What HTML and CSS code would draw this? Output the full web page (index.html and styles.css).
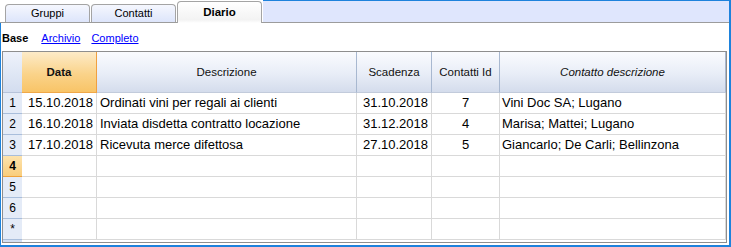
FILE: index.html
```html
<!DOCTYPE html>
<html lang="it">
<head>
  <meta charset="UTF-8" />
  <title>Diario</title>
  <link rel="stylesheet" href="styles.css">
</head>
<body>
  <div class="window">
    <div class="tabbar">
      <div class="tab">Gruppi</div>
      <div class="tab">Contatti</div>
      <div class="tab active">Diario</div>
      <div class="tab-fill"></div>
    </div>

    <div class="panel">
      <div class="modes">
        <b>Base</b>
        <a href="#">Archivio</a>
        <a href="#">Completo</a>
      </div>

      <div class="grid">
        <div class="row head">
          <div class="num"></div>
          <div class="cell sel">Data</div>
          <div class="cell">Descrizione</div>
          <div class="cell">Scadenza</div>
          <div class="cell">Contatti Id</div>
          <div class="cell it">Contatto descrizione</div>
        </div>
        <div class="row">
          <div class="num">1</div>
          <div class="cell right">15.10.2018</div>
          <div class="cell">Ordinati vini per regali ai clienti</div>
          <div class="cell right">31.10.2018</div>
          <div class="cell center">7</div>
          <div class="cell last">Vini Doc SA; Lugano</div>
        </div>
        <div class="row">
          <div class="num">2</div>
          <div class="cell right">16.10.2018</div>
          <div class="cell">Inviata disdetta contratto locazione</div>
          <div class="cell right">31.12.2018</div>
          <div class="cell center">4</div>
          <div class="cell last">Marisa; Mattei; Lugano</div>
        </div>
        <div class="row">
          <div class="num">3</div>
          <div class="cell right">17.10.2018</div>
          <div class="cell">Ricevuta merce difettosa</div>
          <div class="cell right">27.10.2018</div>
          <div class="cell center">5</div>
          <div class="cell last">Giancarlo; De Carli; Bellinzona</div>
        </div>
        <div class="row">
          <div class="num current">4</div>
          <div class="cell"></div>
          <div class="cell"></div>
          <div class="cell"></div>
          <div class="cell"></div>
          <div class="cell"></div>
        </div>
        <div class="row">
          <div class="num">5</div>
          <div class="cell"></div>
          <div class="cell"></div>
          <div class="cell"></div>
          <div class="cell"></div>
          <div class="cell"></div>
        </div>
        <div class="row">
          <div class="num">6</div>
          <div class="cell"></div>
          <div class="cell"></div>
          <div class="cell"></div>
          <div class="cell"></div>
          <div class="cell"></div>
        </div>
        <div class="row">
          <div class="num">*</div>
          <div class="cell"></div>
          <div class="cell"></div>
          <div class="cell"></div>
          <div class="cell"></div>
          <div class="cell"></div>
        </div>
        <div class="row tail">
          <div class="num"></div>
        </div>
      </div>
    </div>
  </div>
</body>
</html>
```

FILE: styles.css
```css
body {
  margin: 0;
  font-family: 'Liberation Sans', Arial, sans-serif;
  color: #000;
  background: #fff;
}
.window {
  width: 731px;
  height: 247px;
  box-sizing: border-box;
  border-right: 2px solid #1e82dc;
  display: flex;
  flex-direction: column;
}

/* tabs */
.tabbar {
  display: flex;
  align-items: flex-end;
  height: 23px;
  box-sizing: border-box;
  padding-left: 5px;
  border-bottom: 1px solid #9c9c9c;
}
.tab {
  width: 85px;
  height: 18px;
  margin-right: 1px;
  box-sizing: border-box;
  border: 1px solid #a4a4a4;
  border-bottom: none;
  border-radius: 4px 4px 0 0;
  background: linear-gradient(#f5f7fe, #dde5fb);
  font-size: 11px;
  line-height: 17px;
  text-align: center;
}
.tab.active {
  height: 22px;
  margin-bottom: -1px;
  background: linear-gradient(#fff, #f3f3f3 85%, #fff);
  font-size: 11.5px;
  font-weight: bold;
  line-height: 20px;
}
.tab-fill {
  flex: 1;
  align-self: stretch;
  background: #dfe6fd;
  border-top: 1px solid #1e82dc;
}

/* content */
.panel {
  flex: 1;
  border-left: 1px solid #1e82dc;
  border-bottom: 2px solid #1e82dc;
  padding: 0 2px 2px 1px;
}
.modes {
  display: flex;
  font-size: 11px;
  line-height: 16px;
  padding: 7px 0 5px;
}
.modes a {
  margin-left: 13px;
  color: #0000ff;
}
.modes a + a {
  margin-left: 11px;
}

.grid {
  width: 725px;
  height: 192px;
  box-sizing: border-box;
  border: 1px solid #8e8e8e;
}
.row {
  display: grid;
  grid-template-columns: 19px 75px 260px 75px 68px 226px;
  height: 21px;
}
.cell, .num {
  box-sizing: border-box;
  border-bottom: 1px solid #d9d9d9;
  line-height: 20px;
  white-space: nowrap;
  overflow: hidden;
}
.cell {
  border-right: 1px solid #d9d9d9;
  font-size: 13px;
  padding: 0 3px;
}
.cell.right {
  text-align: right;
}
.cell.center {
  text-align: center;
}
.cell.last {
  padding-left: 2px;
}
.num {
  background: #e4ebf7;
  border-bottom-color: #a9bedb;
  font-size: 12px;
  text-align: center;
}
.num.current {
  background: linear-gradient(#fde3ae, #f9cd7c);
  border-bottom-color: #f0a23a;
  font-weight: bold;
}

.head {
  height: 41px;
}
.head .cell {
  line-height: 40px;
  font-size: 11.5px;
  text-align: center;
  color: #111;
  background: linear-gradient(#fafbfe, #e8edf7 55%, #d4dcec);
  border-right-color: #a8b8d0;
  border-bottom-color: #c2cbdb;
}
.head .num {
  background: linear-gradient(#eef2fb, #d3ddef);
  border-bottom-color: #b6c3da;
}
.head .cell.sel {
  background: linear-gradient(#fdebc8, #fad38a 55%, #f8c467);
  border-right-color: #f0a040;
  border-bottom-color: #f0a848;
  font-weight: bold;
}
.head .cell.it {
  font-style: italic;
}

.tail {
  height: 2px;
}
.tail .num {
  border: none;
  background: #d3def1;
}
```
